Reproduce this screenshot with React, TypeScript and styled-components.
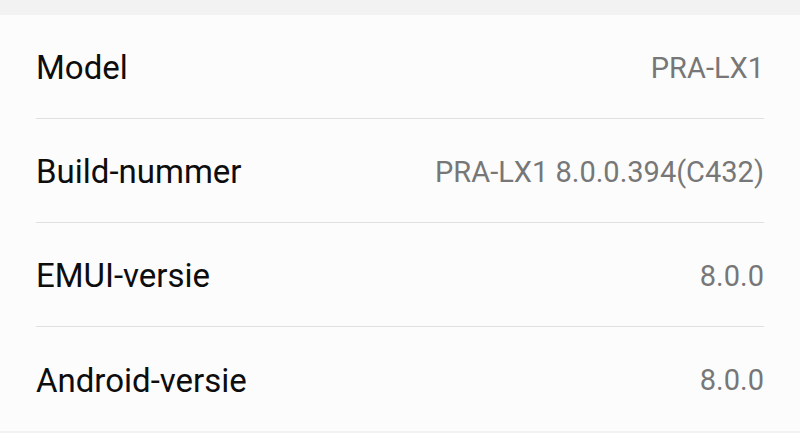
import styled, { createGlobalStyle } from 'styled-components';

const GlobalStyle = createGlobalStyle`
    html, body {
        margin: 0;
        padding: 0;
        background-color: #f2f2f2;
        font-family: Roboto, "Liberation Sans", sans-serif;
    }
`;

const Page = styled.div`
    width: 800px;
    height: 433px;
    padding-top: 15px;
    box-sizing: border-box;
    background-color: #f2f2f2;
    overflow: hidden;
`;

const Card = styled.div`
    background-color: #fcfcfc;
    display: flex;
    flex-flow: column nowrap;
`;

const Row = styled.div<{ last?: boolean }>`
    height: ${p => (p.last ? '102px' : '101px')};
    margin: 0 36px;
    padding-top: 2px;
    display: flex;
    align-items: center;
    justify-content: space-between;
    border-bottom: ${p => (p.last ? 'none' : '1px solid #e0e0e0')};
`;

const Label = styled.span`
    font-size: 33px;
    color: #0d0d0d;
`;

const Value = styled.span`
    font-size: 29px;
    color: #777777;
`;

const items = [
    { label: 'Model', value: 'PRA-LX1' },
    { label: 'Build-nummer', value: 'PRA-LX1 8.0.0.394(C432)' },
    { label: 'EMUI-versie', value: '8.0.0' },
    { label: 'Android-versie', value: '8.0.0' },
];

export default function App() {
    return (
        <>
            <GlobalStyle />
            <Page>
                <Card>
                    {items.map((item, i) => (
                        <Row key={item.label} last={i === items.length - 1}>
                            <Label>{item.label}</Label>
                            <Value>{item.value}</Value>
                        </Row>
                    ))}
                </Card>
            </Page>
        </>
    );
}
